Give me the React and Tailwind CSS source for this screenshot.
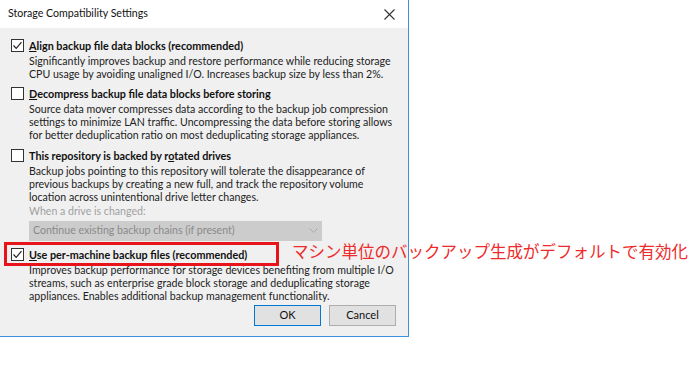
const F = { fontFamily: 'Lato, "Noto Sans", sans-serif' };

function Check({ checked }) {
  return (
    <div className="w-[13px] h-[13px] border border-[#333] bg-white flex items-center justify-center shrink-0">
      {checked && (
        <svg width="11" height="11" viewBox="0 0 11 11">
          <path d="M1.5 5.5 L4.2 8.3 L9.5 2.2" fill="none" stroke="#222" strokeWidth="1.2" />
        </svg>
      )}
    </div>
  );
}

function Option({ checked, label, lines, boxed }) {
  return (
    <div>
      <div className="relative flex items-center gap-[5px] h-[18px]">
        <Check checked={checked} />
        <span className="font-bold text-[10.8px] text-[#111] leading-[13px] whitespace-nowrap">{label}</span>
        {boxed && <div className="absolute -left-[7px] -top-[3px] w-[275px] h-[24px] border-[3px] border-[#e8141c]" />}
      </div>
      <div className="pl-[18px] text-[#222] leading-[13px] pt-[1px] whitespace-nowrap">
        {lines.map((l, i) => <div key={i}>{l}</div>)}
      </div>
    </div>
  );
}

export default function App() {
  return (
    <div className="w-[700px] h-[376px] bg-white relative text-[10.6px] overflow-hidden" style={F}>
      <div className="w-[409px] h-[337px] border-r border-b border-[#3c8fdc] flex flex-col">
        <div className="h-[28px] bg-white flex items-center justify-between pl-[8px] pr-[13px] shrink-0">
          <span className="text-[#111] text-[10.6px]">Storage Compatibility Settings</span>
          <svg width="11" height="11" viewBox="0 0 11 11">
            <path d="M0.5 0.5 L10.5 10.5 M10.5 0.5 L0.5 10.5" stroke="#333" strokeWidth="1.1" />
          </svg>
        </div>
        <div className="flex-1 bg-[#f0f0f0] pl-[11px] pt-[8px] flex flex-col">
          <Option checked label={<><u>A</u>lign backup file data blocks (recommended)</>} lines={[
            'Significantly improves backup and restore performance while reducing storage',
            'CPU usage by avoiding unaligned I/O. Increases backup size by less than 2%.',
          ]} />
          <div className="mt-[3px]">
            <Option label={<><u>D</u>ecompress backup file data blocks before storing</>} lines={[
              'Source data mover compresses data according to the backup job compression',
              'settings to minimize LAN traffic. Uncompressing the data before storing allows',
              'for better deduplication ratio on most deduplicating storage appliances.',
            ]} />
          </div>
          <div className="mt-[4px]">
            <Option label={<>This repository is backed by r<u>o</u>tated drives</>} lines={[
              'Backup jobs pointing to this repository will tolerate the disappearance of',
              'previous backups by creating a new full, and track the repository volume',
              'location across unintentional drive letter changes.',
            ]} />
            <div className="pl-[18px] text-[#a0a0a0] leading-[13px] pt-[1px]">When a drive is changed:</div>
            <div className="ml-[18px] mt-[3px] w-[293px] h-[20px] bg-[#cccccc] flex items-center justify-between px-[4px] text-[#8a8a8a]">
              <span>Continue existing backup chains (if present)</span>
              <svg width="9" height="6" viewBox="0 0 9 6"><path d="M0.5 0.5 L4.5 4.5 L8.5 0.5" fill="none" stroke="#a8a8a8" /></svg>
            </div>
          </div>
          <div className="mt-[4px]">
            <Option checked boxed label={<><u>U</u>se per-machine backup files (recommended)</>} lines={[
              'Improves backup performance for storage devices benefiting from multiple I/O',
              'streams, such as enterprise grade block storage and deduplicating storage',
              'appliances. Enables additional backup management functionality.',
            ]} />
          </div>
          <div className="flex justify-end gap-[8px] pr-[12px] mt-[2px]">
            <div className="w-[67px] h-[21px] bg-[#e1e1e1] border border-[#0078d7] flex items-center justify-center text-[#111] text-[11px]">OK</div>
            <div className="w-[67px] h-[21px] bg-[#e1e1e1] border border-[#adadad] flex items-center justify-center text-[#111] text-[11px]">Cancel</div>
          </div>
        </div>
      </div>
      <div className="absolute left-[292px] top-[240px] text-[#ee2a2a] text-[16.5px] leading-[22px] whitespace-nowrap" style={{ fontFamily: '"Noto Sans CJK JP", sans-serif' }}>
        マシン単位のバックアップ生成がデフォルトで有効化
      </div>
    </div>
  );
}
